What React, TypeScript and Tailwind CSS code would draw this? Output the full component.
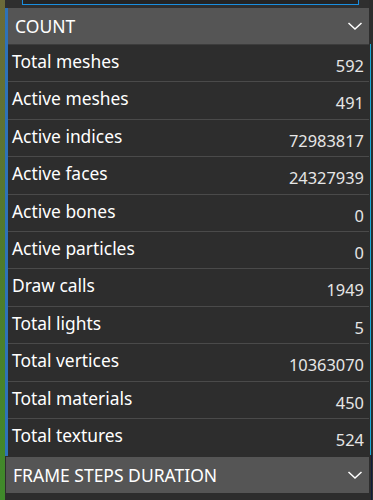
const stats: [string, string][] = [
  ["Total meshes", "592"],
  ["Active meshes", "491"],
  ["Active indices", "72983817"],
  ["Active faces", "24327939"],
  ["Active bones", "0"],
  ["Active particles", "0"],
  ["Draw calls", "1949"],
  ["Total lights", "5"],
  ["Total vertices", "10363070"],
  ["Total materials", "450"],
  ["Total textures", "524"],
];

function Chevron() {
  return (
    <svg width="16" height="10" viewBox="0 0 16 10" className="text-white">
      <polyline points="1.5,2 8,8 14.5,2" fill="none" stroke="currentColor" strokeWidth="1.5" />
    </svg>
  );
}

function Header({ title }: { title: string }) {
  return (
    <div className="flex items-center justify-between h-[36px] bg-[#555555] pl-[7px] pr-[6px] text-white text-[17.5px]">
      <span>{title}</span>
      <Chevron />
    </div>
  );
}

export default function App() {
  return (
    <div
      className="w-[373px] h-[500px] flex bg-[#2d2d2d] overflow-hidden"
      style={{ fontFamily: '"Noto Sans", sans-serif' }}
    >
      {/* grass from the scene behind */}
      <div className="w-[5px] bg-gradient-to-b from-[#6b6a3a] via-[#4f7a2c] to-[#3f8a2a]" />

      <div className="flex-1 flex flex-col">
        <div className="h-[8px] bg-[#2f2f2f] pl-[17px] pr-[10px]">
          <div className="h-[5px] border-x border-b border-[#1a8fe0] bg-[#242424]" />
        </div>

        <div className="flex flex-col border-l-[3px] border-[#2e72b8]">
          <div className="border-b border-[#3c3c3c]">
            <Header title="COUNT" />
          </div>
          {stats.map(([label, value], i) => (
            <div
              key={label}
              className={`flex justify-between h-[37.4px] pl-[4px] pr-[5px] ${
                i < stats.length - 1 ? "border-b border-[#4a4a4a]" : ""
              }`}
            >
              <span className="text-white text-[17.4px] leading-none pt-[8px]">{label}</span>
              <span className="text-[#e6e6e6] text-[16.4px] leading-none pt-[13px]">{value}</span>
            </div>
          ))}
        </div>

        <div className="ml-[1px] mt-[1px]">
          <Header title="FRAME STEPS DURATION" />
        </div>
        <div className="flex-1 bg-[#2d2d2d]" />
      </div>

      <div className="w-[4px] flex flex-col bg-[#2d2d2d]">
        <div className="h-[44px]" />
        <div className="flex-1 ml-[1px] w-[1px] bg-[#1aa7d8]" />
        <div className="h-[45px] ml-[2px] w-[1px] bg-[#141a3a]" />
      </div>
    </div>
  );
}
